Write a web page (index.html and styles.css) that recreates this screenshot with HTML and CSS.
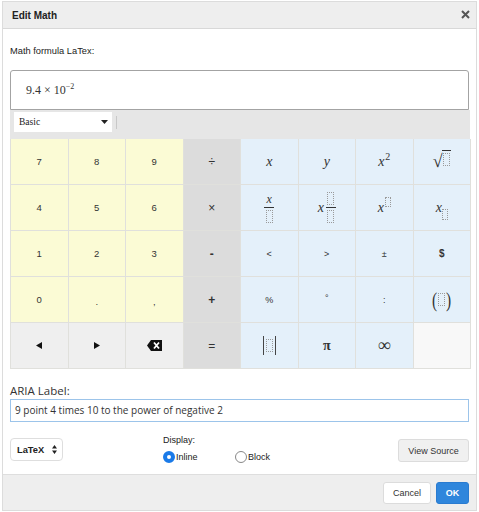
FILE: index.html
```html
<!DOCTYPE html>
<html>
<head>
<meta charset="utf-8">
<link rel="stylesheet" href="styles.css">
</head>
<body>
<div class="dialog">
  <div class="header">
    <span class="title">Edit Math</span>
    <svg class="close" width="9" height="9" viewBox="0 0 9 9"><path d="M1 1L8 8M8 1L1 8" stroke="#555" stroke-width="2"/></svg>
  </div>
  <div class="body">
    <div class="label">Math formula LaTex:</div>
    <div class="formula"><span>9.4 × 10<sup>−2</sup></span></div>
    <div class="toolbar">
      <div class="sel">Basic<svg width="7" height="4" viewBox="0 0 7 4"><path d="M0 0H7L3.5 4Z" fill="#222"/></svg></div>
      <div class="divider"></div>
    </div>
    <div class="keypad">
      <div class="k num">7</div><div class="k num">8</div><div class="k num">9</div><div class="k op">÷</div>
      <div class="k bl m"><i>x</i></div><div class="k bl m"><i>y</i></div>
      <div class="k bl m"><span class="mi"><i>x</i><sup class="s2">2</sup></span></div>
      <div class="k bl m"><span class="sqrt">√</span><span class="rad"><span class="bx"></span></span></div>

      <div class="k num">4</div><div class="k num">5</div><div class="k num">6</div><div class="k op">×</div>
      <div class="k bl m"><span class="frac"><i>x</i><span class="bar"></span><span class="bx"></span></span></div>
      <div class="k bl m"><i>x</i><span class="frac f2"><span class="bx"></span><span class="bar"></span><span class="bx"></span></span></div>
      <div class="k bl m"><i>x</i><span class="bx sup"></span></div>
      <div class="k bl m"><i>x</i><span class="bx sub"></span></div>

      <div class="k num">1</div><div class="k num">2</div><div class="k num">3</div><div class="k op b">-</div>
      <div class="k bl sm">&lt;</div><div class="k bl sm">&gt;</div><div class="k bl sm">±</div><div class="k bl sm b">$</div>

      <div class="k num">0</div><div class="k num low">.</div><div class="k num low">,</div><div class="k op b">+</div>
      <div class="k bl sm">%</div><div class="k bl sm deg">°</div><div class="k bl sm">:</div>
      <div class="k bl m"><span class="par">(</span><span class="bx"></span><span class="par">)</span></div>

      <div class="k nav"><svg width="6" height="7" viewBox="0 0 6 7"><path d="M6 0V7L0 3.5Z" fill="#111"/></svg></div>
      <div class="k nav"><svg width="6" height="7" viewBox="0 0 6 7"><path d="M0 0V7L6 3.5Z" fill="#111"/></svg></div>
      <div class="k nav"><svg width="15" height="11" viewBox="0 0 15 11"><path d="M4 0H15V11H4L0 5.5Z" fill="#111"/><path d="M7 2.5L12 8.5M12 2.5L7 8.5" stroke="#fff" stroke-width="1.8"/></svg></div>
      <div class="k op">=</div>
      <div class="k bl m"><span class="abs"></span><span class="bx"></span><span class="abs"></span></div>
      <div class="k bl m pi">π</div>
      <div class="k bl m inf">∞</div>
      <div class="k empty"></div>
    </div>
    <div class="label aria">ARIA Label:</div>
    <div class="input">9 point 4 times 10 to the power of negative 2</div>
    <div class="row">
      <div class="latex">LaTeX<svg width="5" height="9" viewBox="0 0 5 9"><path d="M0 3.5L2.5 0L5 3.5ZM0 5.5L2.5 9L5 5.5Z" fill="#222"/></svg></div>
      <div class="display">
        <div class="dlabel">Display:</div>
        <div class="radios">
          <span class="opt"><span class="radio on"></span><span class="rtext">Inline</span></span>
          <span class="opt"><span class="radio off"></span><span class="rtext">Block</span></span>
        </div>
      </div>
      <div class="vs">View Source</div>
    </div>
  </div>
  <div class="footer">
    <div class="btn cancel">Cancel</div>
    <div class="btn ok">OK</div>
  </div>
</div>
</body>
</html>
```
FILE: styles.css
```css
html, body { margin: 0; padding: 0; background: #fff; }
body { font-family: "Liberation Sans", Arial, sans-serif; color: #222; }
.dialog {
  margin: 1px 0 0 2px;
  width: 475px;
  height: 510px;
  border: 1px solid #dcdcdc;
  display: flex;
  flex-direction: column;
  box-sizing: border-box;
}
.header {
  height: 26px;
  flex: none;
  background: #eeeeee;
  border-bottom: 1px solid #d8d8d8;
  display: flex;
  align-items: center;
  justify-content: space-between;
  padding: 0 6px 0 9px;
}
.title { font-weight: bold; font-size: 10px; color: #222; }
.close { margin-top: -1px; }
.body { padding: 15px 0 0 7px; flex: 1; }
.label { font-size: 9.3px; line-height: 14px; color: #222; }
.formula {
  margin-top: 12px;
  width: 459px;
  height: 40px;
  border: 1px solid #a3a3a3;
  border-radius: 3px 3px 0 0;
  display: flex;
  align-items: center;
  padding-left: 15px;
  box-sizing: border-box;
  font-family: "Liberation Serif", "DejaVu Serif", serif;
  font-size: 12px;
  color: #333;
}
.formula sup { font-size: 8px; vertical-align: 5px; }
.toolbar {
  width: 460px;
  height: 29px;
  background: #e6e6e6;
  display: flex;
  align-items: flex-start;
  padding: 2px 0 0 4px;
  box-sizing: border-box;
}
.sel {
  width: 98px;
  height: 20px;
  background: #fff;
  display: flex;
  align-items: center;
  justify-content: space-between;
  padding: 0 4px 0 5px;
  box-sizing: border-box;
  font-family: "Liberation Serif", serif;
  font-size: 9.5px;
  color: #222;
}
.divider { width: 1px; height: 13px; background: #c8c8c8; margin: 4px 0 0 4px; }
.keypad {
  width: 461px;
  display: grid;
  grid-template-columns: repeat(8, 1fr);
  grid-auto-rows: 45px;
  gap: 1px;
  background: #e0e0dc;
  border: 1px solid #e0e0dc;
  border-top: 0;
  box-sizing: border-box;
}
.k {
  display: flex;
  align-items: center;
  justify-content: center;
  font-size: 9.5px;
  color: #333;
}
.num { background: #fbfbd5; }
.low { padding-top: 4px; box-sizing: border-box; }
.op { background: #dcdcdc; font-size: 12px; color: #333; }
.op.b { font-weight: bold; }
.bl { background: #e4f0fa; }
.nav { background: #efefef; }
.empty { background: #f8f8f8; }
.sm { font-size: 9px; }
.sm.b { font-weight: bold; font-size: 10px; }
.deg { align-items: flex-start; padding-top: 16px; box-sizing: border-box; }
.m { font-family: "Liberation Serif", "DejaVu Serif", serif; font-size: 14px; color: #333; }
.m i { font-style: italic; }
.mi { display: inline-block; }
.s2 { font-size: 10px; vertical-align: 6px; margin-left: 1px; line-height: 0; }
.bx { display: inline-block; width: 7px; height: 13px; border: 1px dotted #9a9a9a; box-sizing: border-box; }
.sqrt { font-size: 18px; margin-right: -1px; }
.rad { border-top: 1px solid #333; padding: 2px 1px 0 1px; margin-top: -4px; }
.frac { display: inline-flex; flex-direction: column; align-items: center; }
.frac i { font-size: 12px; line-height: 12px; }
.frac .bar { width: 10px; height: 1px; background: #333; margin: 2px 0 2px; }
.frac.f2 { margin-left: 2px; }
.bx.sup { height: 10px; width: 6px; margin-top: -12px; margin-left: 1px; }
.bx.sub { height: 11px; width: 6px; margin-top: 13px; margin-left: 0; }
.par { font-size: 22px; font-weight: 300; line-height: 22px; transform: scaleX(0.7); }
.abs { display: inline-block; width: 1px; height: 19px; background: #444; margin: 0 2px; }
.pi { font-size: 14px; font-weight: bold; }
.inf { font-size: 18px; }
.aria { margin-top: 15px; font-family: "Open Sans", sans-serif; font-size: 11.5px; color: #333; }
.input {
  margin-top: 1px;
  width: 459px;
  height: 23px;
  box-sizing: border-box;
  border: 1px solid #9cc4ea;
  padding-left: 4px;
  font-family: "Open Sans", sans-serif;
  font-size: 10px;
  line-height: 20px;
  color: #333;
}
.row {
  display: flex;
  align-items: flex-start;
  margin-top: 16px;
  width: 459px;
}
.latex {
  width: 53px;
  height: 23px;
  box-sizing: border-box;
  border: 1px solid #dedede;
  border-radius: 4px;
  display: flex;
  align-items: center;
  justify-content: space-between;
  padding: 0 5px 0 6px;
  font-size: 9.3px;
  font-weight: bold;
  color: #222;
}
.display { margin-left: 100px; margin-top: -4px; font-size: 9px; color: #222; }
.dlabel { line-height: 12px; }
.radios { display: flex; align-items: center; margin-top: 5px; }
.opt { display: inline-flex; align-items: center; width: 72px; }
.radio { width: 12px; height: 12px; border-radius: 50%; box-sizing: border-box; display: inline-block; }
.radio.on { border: 4.5px solid #1a7ae8; background: #fff; }
.radio.off { border: 1px solid #888; background: #fff; }
.rtext { margin-left: 1px; font-size: 9px; }
.vs {
  margin-left: auto;
  width: 71px;
  height: 23px;
  box-sizing: border-box;
  background: #f0f0f0;
  border: 1px solid #dcdcdc;
  border-radius: 3px;
  font-size: 9px;
  color: #333;
  display: flex;
  align-items: center;
  justify-content: center;
  margin-top: 1px;
}
.footer {
  height: 35px;
  flex: none;
  background: #eeeeee;
  border-top: 1px solid #dedede;
  display: flex;
  align-items: center;
  justify-content: flex-end;
  padding-right: 7px;
  gap: 5px;
}
.btn {
  height: 22px;
  box-sizing: border-box;
  border-radius: 3px;
  font-size: 9px;
  display: flex;
  align-items: center;
  justify-content: center;
}
.cancel { width: 48px; background: #fff; border: 1px solid #dcdcdc; color: #333; }
.ok { width: 33px; background: #2f86dc; border: 1px solid #2a7bd0; color: #fff; font-weight: bold; }
```
